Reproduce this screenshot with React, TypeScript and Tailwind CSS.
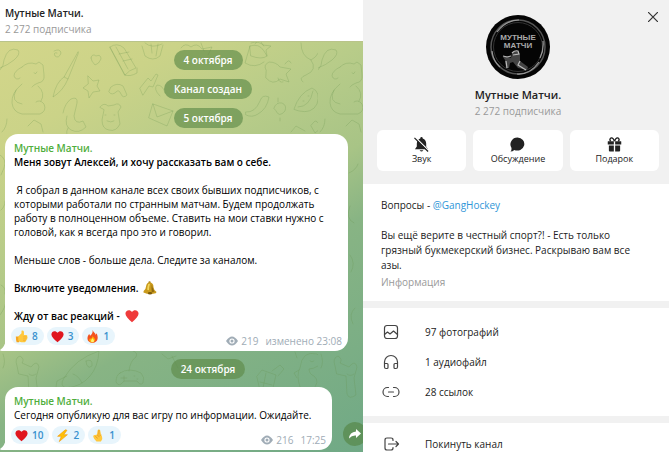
import React from 'react'

type Reaction = { emoji: 'thumb' | 'heart' | 'fire' | 'bolt' | 'fingers'; label: string; count: number }

const emojiPaths = {
  thumb: (
    <>
      <path d="M1 8h4v7H2q-1-3-1-7z" fill="#f5a623" />
      <path d="M4 8l4-4V1q2-1 3 1v4h3q2 1 1 2 1 1 0 2 1 1-1 2 0 2-1 2l-1 1H8q-3 0-4-2z" fill="#ffc83d" />
      <path d="M10 8.500h4.500M10 11h4M10 13h3" stroke="#eda22c" strokeWidth=".7" fill="none" />
    </>
  ),
  heart: (
    <path d="M8 15Q.8 9.500.5 5.500C.5 1.500 5.500 0 8 3.500c2.500-3.500 7.500-2 7.500 2Q15.200 9.500 8 15z" fill="currentColor" />
  ),
  fire: (
    <>
      <path d="M8 0c1 3 4 4 4 6l1-2c2 4 3 11-5 12C0 15 1 8 4 5l1 2Q9 4 8 0z" fill="#f4511e" />
      <path d="M8 6c0 3 4 4 3 7-1 3-6 3-7 0 0-2 1-3 1-3l1 1q3-2 2-5z" fill="#ffb300" />
      <path d="M8 10q3 3 1 5H7q-2-2 1-5z" fill="#fff176" />
    </>
  ),
  bolt: <path d="M11.500 1L2 9h4.500L4 15.500 14 7H9.500l4-5.500z" fill="#ffc107" stroke="#f39c12" strokeWidth=".8" />,
  fingers: (
    <>
      <path d="M6 7L7 1.500q1.500-2 3 0l1 5q2 3 1.500 6L11 15.500H5.500q-3-3-4-6 0-2.500 2-2z" fill="#ffc83d" />
      <path d="M8.500 1v6M6 7l3 2.500M4 9l3 2.500M11 7l-2 2" stroke="#e09120" strokeWidth=".9" fill="none" />
    </>
  ),
}

const Emoji = ({ name, className }: { name: keyof typeof emojiPaths; className: string }) => (
  <svg viewBox="0 0 16 16" className={className} aria-hidden="true">
    {emojiPaths[name]}
  </svg>
)

const BellEmoji = () => (
  <svg viewBox="0 0 16 16" className="ml-[5px] inline-block h-[14px] w-[14px] align-[-3px]" aria-hidden="true">
    <circle cx="7.500" cy="1.500" r="1.300" fill="#a67c16" />
    <path d="M7.500 1.500Q12 2 12 7q.2 3 3.500 5.500l-1 1.500Q7 16 .5 13l.2-1.500Q3.500 9 3.500 6q.5-4 4-4.500z" fill="#c99a1c" />
    <path d="M6 3.500Q5 6 4.800 10l2 .5Q7 6 8 3z" fill="#f3d65c" />
    <path d="M10 4q1 5 3 8l-3 1Q9.500 8 10 4z" fill="#8f6a10" />
    <ellipse cx="8" cy="14" rx="2.500" ry="1.500" fill="#7b5a0c" />
  </svg>
)

const Doodles = () => (
  <svg className="absolute inset-0 h-full w-full" aria-hidden="true">
    <defs>
      <pattern id="doodles" width="318" height="430" patternUnits="userSpaceOnUse">
        <g transform="translate(0 -42)" fill="none" stroke="#5f8f45" strokeOpacity=".24" strokeWidth="1" strokeLinecap="round" strokeLinejoin="round">
          {/* Top rows */}
          <path d="M0 70q4-4 4-10Q8 46 18 50q3 4-4 10-6 5-14 8M54 51q6-3 7 2-2 6-6 3-2-4 2-3" />
          <path d="M22 67q6-6 14-3l3-2 4 3 1 10q1 7-6 8-5 2-6 4M22 67q-8 4-8 9 2 5 6 2M34 73q2 2 3-1M22 84q-11 9-10 19 1 9 10 11h18q7-3 4-10-4-5-8-2M16 90q-6 12 6 14M38 86q8 7 3 15" />
          <path d="M78 52l-14 25 4 2 10-25zM64 77q-8 5-11 20 10-6 15-18M91 58q1-5 5-2 5-2 5 3-2 5-6 6-4-4-4-7" />
          <path d="M110 47q7-5 14 1l12 20q-7 2-11 7zM110 47l15 28M116 47l12 22M125 75q5 2 12-2v-5M119 54l10-2M123 61l9-2" />
          <path d="M88 76l5 5 6-1-2 6 3 5-7 1-4 6-1-7-5-3 5-4zM111 87q6-5 12-1l4 9q-4 4-6-1-2-5-5-2-4 4-7 0zM140 88l8-10 3 3 5-7 2 1-5 12-4-1-6 9z" />
          <path d="M142 46l3 10q8 6 15 0l3-11M145 43q7 6 17 1M151 44l1 9M158 44l-2 12M181 48q4-6 10-1 6-5 11 2l10-2-4 8M201 43l3 8" />
          <path d="M63 113q2-10 8-14 7-3 6 4l-3 13q1 9 9 5l3 6q-7 7-15 3-7-4-4-14M100 107q4-5 8-1l6-1q5-3 7 2l-3 5 2 12q-4 8-11 6-7-1-7-10l2-10zM105 115h1M114 115h1M107 121q4 2 7 0" />
          <path d="M153 104l20 7-6 15-18-8zM153 104l4 13 16-6M160 96q-7-7-3-11 6 0 8 8M250 46q9-3 14 5l3 5q-5 4-16 0zM250 46l-5 17q10 6 19-1M251 43q8-3 13 3" />
          <path d="M266 70q-3-5 3-8 7 0 11 5l11 2-5 5 3 8-9-3q-7 7-14-1zM278 78q1 5 5 4M285 64q4-6 6-1M255 44l4-5 4 6 8 1-5 4 1 6" />
          <path d="M301 43q0 13 10 17 10-5 9-18M311 60q7 10-5 15-8 3-3 7M246 112q9 1 14-11 2-7 9-4-2 12-11 17-6 4-12 1zM274 108q2-6 8-5 5 2 3 8-6 7-9 0zM278 102v-4M280 118v3M294 109q5-16 18-21 9 4 5 16-5 10-18 7zM298 107q12 0 15-16M303 101h1M308 96h1" />
          <path d="M7 119q0 8-5 13M28 126l6-6 7 4 2 8M68 128q-4 7 3 9M313 123q3-4 5 0 6-1 3 5l-6 5-4-7zM291 132l5-6 9 5M325 82l-2 13M321 83l5 1" />
          {/* Gutters */}
          <path d="M0 155q7 4 4 13l-3 7M1 210q4-3 4-9M0 315q6-8 6-15M1 285q5 2 4 9M31 173q7-3 9-9M32 206q-5 13 4 17M32 255q6 8 1 17M37 308q-7 6-2 16" />
          {/* Bottom rows */}
          <path d="M3 354q3 8 0 14M17 366q-3-8 3-10 5 3 2 7l9 4q6-8 8 0l-3 11 2 17q-7 5-9-1l-1-18-9-2zM29 374q3 3 7 0" />
          <path d="M66 388q-7-2-2-10 11-19 35-27-1 16-9 25-9 11-24 12zM73 374q6 2 9 9M86 361q7-3 6 5-5 4-6-5M67 376l-10 5-2 12q8 0 14-6" />
          <path d="M120 373q9-6 21 0 4 4 2 10-3 3-6-2h-13q-5 7-8 1 0-7 4-9zM124 376v5M121 378h6M134 376h1M137 379h1M129 371q1-10 7-14 2-5-3-6" />
          <path d="M162 354l6 5 8-3M172 356l6 12M257 376l5-6 14 5-4 17-12-3zM266 373l-3 15M260 382l12 3M272 371l8-6 4 4-6 7" />
          <path d="M300 387q-4-12 0-19 2-18 17-14 8 6 1 12-5 3-9 3 0 5 5 7 7 6-2 14zM310 361q2 2 4 0M299 370l-5 3 3 5M297 358l-2-6" />
        </g>
      </pattern>
    </defs>
    <rect width="100%" height="100%" fill="url(#doodles)" />
  </svg>
)

const DatePill = ({ children }: { children: React.ReactNode }) => (
  <div className="flex justify-center pl-12">
    <div className="rounded-full bg-[#5e8a48]/65 px-[10px] leading-5 font-semibold text-white">{children}</div>
  </div>
)

type MessageProps = {
  children: React.ReactNode
  reactions: Reaction[]
  views: number
  time: string
}

const Message = ({ children, reactions, views, time }: MessageProps) => (
  <article className="relative w-fit max-w-[343px] min-w-[327px] rounded-[13px] rounded-bl-none bg-white px-[9px] pt-[7px] pb-[6px] leading-[14px] text-black">
    <svg viewBox="0 0 6 12" className="absolute bottom-0 -left-[5px] h-3 w-[6px]" aria-hidden="true">
      <path d="M6 0Q5 8 0 11q0 1 2 1h4z" fill="#fff" />
    </svg>
    <h2 className="font-semibold text-[#4fae3c]">Мутные Матчи.</h2>
    {children}
    <div className="mt-1 -ml-[3px] flex items-end justify-between">
      <div className="flex gap-[3px]">
        {reactions.map((r) => (
          <button
            key={r.emoji}
            aria-label={`${r.label} ${r.count}`}
            className="flex h-[18px] items-center gap-1 rounded-full bg-[#e8f5fc] pr-[6px] pl-1 font-semibold text-[#3991ce]"
          >
            <Emoji name={r.emoji} className="h-[13px] w-[13px] text-[#e0161f]" />
            {r.count}
          </button>
        ))}
      </div>
      <div className="-mr-[3px] -mb-[3px] flex items-center gap-[3px] text-[#a0acb6]">
        <svg viewBox="0 0 12 10" className="h-[10px] w-3" aria-hidden="true">
          <path d="M0 5q6-9 12 0-6 9-12 0z" fill="#a0acb6" />
          <circle cx="6" cy="5" r="2.600" fill="#fff" />
          <circle cx="6" cy="5" r="1.500" fill="#a0acb6" />
        </svg>
        <span>{views}</span>
        <span className="ml-1">{time}</span>
      </div>
    </div>
  </article>
)

const Avatar = () => (
  <svg viewBox="0 0 64 64" className="h-16 w-16" role="img" aria-label="Мутные Матчи">
    <circle cx="32" cy="32" r="32" fill="#050505" />
    <circle cx="32" cy="32" r="27" fill="none" stroke="#555" strokeWidth="1.500" />
    <circle cx="32" cy="32" r="24.500" fill="none" stroke="#333" />
    <path d="M11 17Q20 5 33 5M53 47q-9 13-22 12M6 36q1 10 8 16M57 26q1 9-3 17" fill="none" stroke="#999" strokeWidth="1.200" />
    <g className="font-['Liberation_Sans',sans-serif]" fontSize="8" fontWeight="700" textAnchor="middle" fill="#aaa">
      <text x="32" y="25">МУТНЫЕ</text>
      <text x="32" y="33">МАТЧИ</text>
    </g>
    <path d="M26 38q3-3 6-2l2 4v6l8 6-1 3-9-2-5-6-3 1-1 5h-3l-1-8-2-3 3-1 5 2z" fill="#444" />
    <path d="M26 38q3-3 6-2l1 3-6 1M17 41l4 1 4-1M20 46l1 7M34 46l-2 4 8 5" fill="none" stroke="#bbb" strokeWidth="1.200" />
  </svg>
)

const actions = [
  {
    label: 'Звук',
    icon: (
      <>
        <path d="M8 0q1.300 0 1.300 1.500Q13 3 13 7v3l2 3H1l2-3V7q0-4 3.700-5.500Q6.700 0 8 0zM6 14h4q-2 3-4 0z" fill="#222" />
        <path d="M1.500.5l14 14" stroke="#fff" strokeWidth="1.500" />
        <path d="M.5 1l14.500 14.500" stroke="#222" strokeWidth="1.300" />
      </>
    ),
  },
  {
    label: 'Обсуждение',
    icon: <path d="M8 .5a7.500 7 0 1 1-3.500 13.300Q3 15.500.5 15.500q1.500-1.500 1-4A7.500 7.300 0 0 1 8 .5z" fill="#222" />,
  },
  {
    label: 'Подарок',
    icon: (
      <>
        <path d="M1 4.500h6.300V8H.8V5zM8.700 4.500H15l.2.500v3H8.700zM2 9h5.300v6.500H3q-1 0-1-1zM8.700 9H14v5.500q0 1-1 1H8.700z" fill="#222" />
        <path d="M8 4.500Q6.500.5 4.500 1 2 2.500 4 4.500M8 4.500Q9.500.5 11.500 1 14 2.500 12 4.500" fill="none" stroke="#222" strokeWidth="1.500" />
      </>
    ),
  },
]

const mediaRows = [
  {
    label: '97 фотографий',
    icon: (
      <>
        <rect x="1.500" y="1.500" width="13" height="13" rx="2.500" />
        <path d="M1.500 10.500l3-2.500 2.500 2 3.500-3 4 3.500" />
      </>
    ),
  },
  {
    label: '1 аудиофайл',
    icon: (
      <path d="M1.500 12V8a6.500 6.500 0 0 1 13 0v4M1.500 9.500H4q1 0 1 1v3q0 1-1 1H3q-1.500 0-1.500-1.500zM14.500 9.500H12q-1 0-1 1v3q0 1 1 1h1q1.500 0 1.500-1.500z" />
    ),
  },
  {
    label: '28 ссылок',
    icon: <path d="M5.500 3.500H4.500a4.500 4.500 0 0 0 0 9h1M10.500 3.500h1a4.500 4.500 0 0 1 0 9h-1M5.500 8h5" />,
  },
]

const MenuRow = ({ label, icon }: { label: string; icon: React.ReactNode }) => (
  <button className="flex h-[30px] w-full items-center gap-[26px] px-5 text-left text-[#222]">
    <svg viewBox="0 0 16 16" className="h-4 w-4 overflow-visible" fill="none" stroke="#444" strokeWidth="1.200" strokeLinecap="round" strokeLinejoin="round" aria-hidden="true">
      {icon}
    </svg>
    {label}
  </button>
)

const App = () => {
  return (
    <div className="flex h-screen overflow-hidden bg-white font-['Open_Sans','Noto_Sans',sans-serif] text-[10px]">
      {/* Chat */}
      <main className="flex min-w-0 flex-1 flex-col">
        <header className="flex h-[42px] shrink-0 flex-col justify-center border-b border-[#b9c48a] px-[5px] leading-4">
          <h1 className="font-semibold text-[#222]">Мутные Матчи.</h1>
          <p className="text-[#999]">2 272 подписчика</p>
        </header>
        <div className="relative flex-1 overflow-hidden bg-[linear-gradient(150deg,#d3d68a_0%,#cbd388_17%,#b8cc89_34%,#a8c486_50%,#88b484_62%,#70a986_100%)]">
          <Doodles />
          <div className="relative flex flex-col gap-[9px] pt-2 pl-[5px]">
            <DatePill>4 октября</DatePill>
            <DatePill>Канал создан</DatePill>
            <DatePill>5 октября</DatePill>
          </div>
          <div className="relative flex flex-col gap-2 pt-[6px] pl-[5px]">
            <Message
              reactions={[
                { emoji: 'thumb', label: 'Нравится', count: 8 },
                { emoji: 'heart', label: 'Сердце', count: 3 },
                { emoji: 'fire', label: 'Огонь', count: 1 },
              ]}
              views={219}
              time="изменено 23:08"
            >
              <p className="font-semibold">Меня зовут Алексей, и хочу рассказать вам о себе.</p>
              <p className="mt-[14px] whitespace-pre-wrap">
                {' Я собрал в данном канале всех своих бывших подписчиков, с которыми работали по странным матчам. Будем продолжать работу в полноценном объеме. Ставить на мои ставки нужно с головой, как я всегда про это и говорил.'}
              </p>
              <p className="mt-[14px]">Меньше слов - больше дела. Следите за каналом.</p>
              <p className="mt-[14px] h-[14px] font-semibold">
                Включите уведомления.
                <BellEmoji />
              </p>
              <p className="mt-[14px] h-[14px] font-semibold">
                Жду от вас реакций -
                <Emoji name="heart" className="ml-[5px] inline-block h-[14px] w-[14px] align-[-3px] text-[#ef3b3b]" />
              </p>
            </Message>
            <DatePill>24 октября</DatePill>
            <div className="-mr-1 flex items-end justify-between">
              <Message
                reactions={[
                  { emoji: 'heart', label: 'Сердце', count: 10 },
                  { emoji: 'bolt', label: 'Молния', count: 2 },
                  { emoji: 'fingers', label: 'Пальцы', count: 1 },
                ]}
                views={216}
                time="17:25"
              >
                <p>Сегодня опубликую для вас игру по информации. Ожидайте.</p>
              </Message>
              <button aria-label="Поделиться" className="mb-1 flex h-6 w-6 shrink-0 items-center justify-center rounded-full bg-[#5a8c50]/80">
                <svg viewBox="0 0 12 10" className="h-[10px] w-3" aria-hidden="true">
                  <path d="M7 0l5 4.500L7 9V6.500Q3 6 0 9.500.5 3 7 2.500z" fill="#fff" />
                </svg>
              </button>
            </div>
          </div>
        </div>
      </main>

      {/* Channel info */}
      <aside className="flex w-[306px] shrink-0 flex-col bg-[#f1f1f1] text-[#222]">
        <section className="relative flex flex-col items-center pt-[15px] pr-[10px] pb-[13px] pl-[14px]">
          <button aria-label="Закрыть" className="absolute top-3 right-[11px]">
            <svg viewBox="0 0 10 10" className="h-[10px] w-[10px]" aria-hidden="true">
              <path d="M0 0l10 10M10 0L0 10" stroke="#333" strokeWidth="1.200" />
            </svg>
          </button>
          <Avatar />
          <h2 className="mt-2 text-[11px] leading-4 font-semibold">Мутные Матчи.</h2>
          <p className="leading-4 text-[#999]">2 272 подписчика</p>
          <div className="mt-[11px] grid w-full grid-cols-3 gap-[7px]">
            {actions.map((a) => (
              <button key={a.label} className="flex h-[41px] flex-col items-center rounded-[6px] bg-white pt-[7px] text-[9px] leading-[14px]">
                <svg viewBox="0 0 16 16" className="h-[15px] w-[15px]" aria-hidden="true">
                  {a.icon}
                </svg>
                {a.label}
              </button>
            ))}
          </div>
        </section>

        <section className="bg-white pt-[14px] pr-7 pb-[11px] pl-[18px] leading-[15px]">
          <p>
            Вопросы - <a href="#GangHockey" className="text-[#2f96d8]">@GangHockey</a>
          </p>
          <p className="mt-[15px]">Вы ещё верите в честный спорт?! - Есть только грязный букмекерский бизнес. Раскрываю вам все азы.</p>
          <p className="mt-[2px] text-[#999]">Информация</p>
        </section>

        <section className="mt-[7px] bg-white py-[9px]">
          {mediaRows.map((row) => (
            <MenuRow key={row.label} label={row.label} icon={row.icon} />
          ))}
        </section>

        <section className="mt-[7px] flex-1 bg-white pt-[6px]">
          <MenuRow
            label="Покинуть канал"
            icon={<path d="M10 4.500V4q0-2-2-2H4Q2 2 2 4v8q0 2 2 2h4q2 0 2-2v-.5M5.500 8H15.500M13 5.500L15.500 8 13 10.500" />}
          />
        </section>
      </aside>
    </div>
  )
}

export default App
